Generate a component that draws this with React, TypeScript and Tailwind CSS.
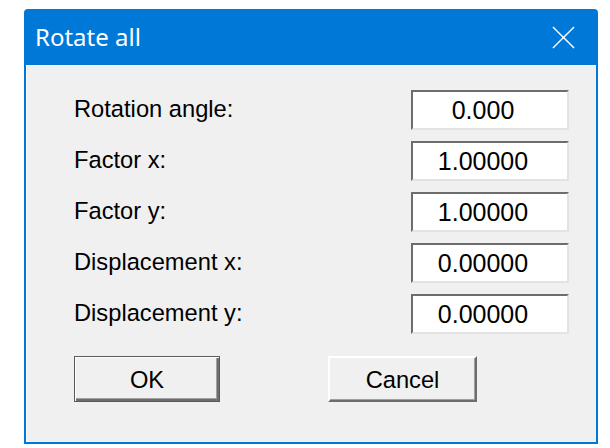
const ROWS = [
  { label: 'Rotation angle:', value: '0.000' },
  { label: 'Factor x:', value: '1.00000' },
  { label: 'Factor y:', value: '1.00000' },
  { label: 'Displacement x:', value: '0.00000' },
  { label: 'Displacement y:', value: '0.00000' },
];

export default function App() {
  return (
    <div className="w-[610px] h-[448px] bg-white pt-[9px] pl-[24px]">
      <div className="w-[574px] h-[435px] bg-[#0078d7] rounded-t-[4px] flex flex-col px-[2px] pb-[2px]">
        {/* Title bar */}
        <div className="h-[56px] flex items-center justify-between pl-[9px] pr-[21px]">
          <span className="text-white text-[24px] font-['Noto_Sans',sans-serif] leading-none">Rotate all</span>
          <svg width="23" height="23" viewBox="0 0 24 24" className="text-white">
            <path d="M1 1 L23 23 M23 1 L1 23" stroke="currentColor" strokeWidth="1.5" />
          </svg>
        </div>

        {/* Body */}
        <div className="flex-1 bg-[#f0f0f0] border-l border-t border-[#fafafa] pt-[24px] pl-[47px] font-['Liberation_Sans',sans-serif] text-[23.7px] text-black">
          <div className="grid grid-cols-[337px_158px] gap-y-[11px]">
            {ROWS.map((r) => (
              <div key={r.label} className="contents">
                <div className="h-[40px] flex items-center pb-[1px] leading-none">{r.label}</div>
                <div className="h-[40px] bg-white border-2 border-t-[#6d6d6d] border-l-[#6d6d6d] border-b-[#e3e3e3] border-r-[#e3e3e3] flex items-center justify-center leading-none pt-[1px] pr-[14px] text-[25px]">
                  {r.value}
                </div>
              </div>
            ))}
          </div>

          <div className="flex mt-[22px] gap-[108px]">
            <button className="w-[146px] h-[46px] bg-[#f0f0f0] border border-[#5a5a5a] shadow-[inset_1px_1px_0_#ffffff,inset_-2px_-2px_0_#6d6d6d,inset_-3px_-3px_0_#a0a0a0] flex items-center justify-center leading-none pt-[4px]">
              OK
            </button>
            <button className="w-[149px] h-[46px] bg-[#f0f0f0] border-2 border-t-[#ffffff] border-l-[#ffffff] border-b-[#6d6d6d] border-r-[#6d6d6d] shadow-[inset_-1px_-1px_0_#a0a0a0] flex items-center justify-center leading-none pt-[4px]">
              Cancel
            </button>
          </div>
        </div>
      </div>
    </div>
  );
}
